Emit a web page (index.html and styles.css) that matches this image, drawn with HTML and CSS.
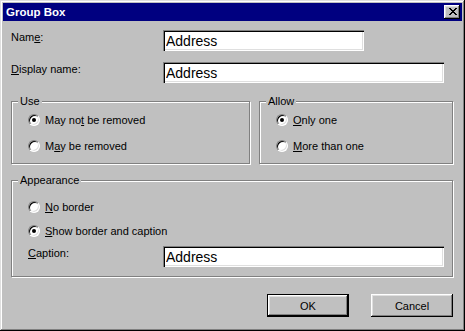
FILE: index.html
```html
<!DOCTYPE html>
<html lang="en">
<head>
  <meta charset="UTF-8">
  <title>Group Box</title>
  <link rel="stylesheet" href="styles.css">
</head>
<body>
  <div class="window">
    <div class="titlebar">
      <span class="title">Group Box</span>
      <button class="close" aria-label="Close">
        <svg width="8" height="7" viewBox="0 0 8 7" shape-rendering="crispEdges">
          <path fill="#000" d="M0 0h2v1H0z M6 0h2v1H6z M1 1h2v1H1z M5 1h2v1H5z M2 2h4v1H2z M3 3h2v1H3z M2 4h4v1H2z M1 5h2v1H1z M5 5h2v1H5z M0 6h2v1H0z M6 6h2v1H6z"/>
        </svg>
      </button>
    </div>

    <div class="content">
      <div class="field-row">
        <label class="field-label">Nam<u>e</u>:</label>
        <input class="textbox name-box" type="text" value="Address">
      </div>
      <div class="field-row">
        <label class="field-label"><u>D</u>isplay name:</label>
        <input class="textbox wide-box" type="text" value="Address">
      </div>

      <div class="groups">
        <fieldset class="group use-group">
          <legend>Use</legend>
          <div class="group-body">
            <div class="option"><span class="radio checked"></span><span>May no<u>t</u> be removed</span></div>
            <div class="option"><span class="radio"></span><span>M<u>a</u>y be removed</span></div>
          </div>
        </fieldset>
        <fieldset class="group allow-group">
          <legend>Allow</legend>
          <div class="group-body">
            <div class="option"><span class="radio checked"></span><span><u>O</u>nly one</span></div>
            <div class="option"><span class="radio"></span><span><u>M</u>ore than one</span></div>
          </div>
        </fieldset>
      </div>

      <fieldset class="group appearance-group">
        <legend>Appearance</legend>
        <div class="group-body appearance-body">
          <div class="option"><span class="radio"></span><span><u>N</u>o border</span></div>
          <div class="option"><span class="radio checked"></span><span><u>S</u>how border and caption</span></div>
          <div class="caption-row">
            <label class="caption-label"><u>C</u>aption:</label>
            <input class="textbox wide-box" type="text" value="Address">
          </div>
        </div>
      </fieldset>

      <div class="buttons">
        <button class="btn default">OK</button>
        <button class="btn">Cancel</button>
      </div>
    </div>
  </div>
</body>
</html>
```

FILE: styles.css
```css
* {
  box-sizing: border-box;
}

body {
  margin: 0;
  background: #c0c0c0;
  font-family: "Liberation Sans", Arial, sans-serif;
  font-size: 11px;
  color: #000;
}

.window {
  width: 465px;
  height: 331px;
  padding: 3px;
  background: #c0c0c0;
  box-shadow: inset -1px -1px #000, inset 1px 1px #dfdfdf,
              inset -2px -2px #808080, inset 2px 2px #fff;
}

.titlebar {
  height: 18px;
  padding: 0 2px 0 3px;
  background: #000080;
  color: #fff;
  display: flex;
  align-items: center;
  justify-content: space-between;
}

.title {
  font-weight: bold;
  font-size: 11.5px;
}

.close {
  width: 16px;
  height: 14px;
  padding: 0 0 1px 1px;
  border: none;
  background: #c0c0c0;
  display: flex;
  align-items: center;
  justify-content: center;
  box-shadow: inset -1px -1px #000, inset 1px 1px #fff,
              inset -2px -2px #808080, inset 2px 2px #dfdfdf;
}

.content {
  padding: 9px 9px 0 8px;
}

/* top label + textbox rows */
.field-row {
  display: flex;
  align-items: flex-start;
  height: 21px;
}

.field-row + .field-row {
  margin-top: 11px;
}

.field-label {
  width: 152px;
  line-height: 13px;
  padding-top: 1px;
}

.textbox {
  height: 21px;
  padding: 0 2px 0 3px;
  border: none;
  outline: none;
  background: #fff;
  font-family: "Liberation Sans", Arial, sans-serif;
  font-size: 14px;
  color: #000;
  box-shadow: inset 1px 1px #808080, inset 2px 2px #000,
              inset -1px -1px #fff, inset -2px -2px #dfdfdf;
}

.name-box {
  width: 201px;
}

.wide-box {
  width: 281px;
}

/* group boxes */
.groups {
  display: flex;
  gap: 9px;
  margin-top: 12px;
}

.group {
  margin: 0;
  padding: 0;
  min-width: 0;
  border: 1px solid #808080;
  box-shadow: inset 1px 1px #fff, 1px 1px #fff;
}

.group legend {
  margin-left: 6px;
  padding: 0 2px;
  line-height: 13px;
  background: #c0c0c0;
}

.use-group {
  width: 239px;
}

.allow-group {
  width: 194px;
}

.appearance-group {
  width: 442px;
  margin-top: 10px;
}

.group-body {
  display: flex;
  flex-direction: column;
  gap: 10px;
  padding: 4px 0 9px 16px;
}

.appearance-body {
  gap: 8px;
  padding-top: 12px;
}

.option {
  display: flex;
  align-items: center;
  gap: 5px;
  height: 16px;
}

.radio {
  position: relative;
  width: 12px;
  height: 12px;
  border-radius: 50%;
  border: 1px solid;
  border-color: #808080 #fff #fff #808080;
  background: #fff;
  box-shadow: inset 1px 1px #000, inset -1px -1px #dfdfdf;
}

.radio.checked::after {
  content: "";
  position: absolute;
  left: 3px;
  top: 3px;
  width: 4px;
  height: 4px;
  border-radius: 50%;
  background: #000;
}

.caption-row {
  display: flex;
  align-items: flex-start;
  margin-top: -1px;
}

.caption-label {
  width: 135px;
  line-height: 13px;
  padding-top: 1px;
}

/* dialog buttons */
.buttons {
  display: flex;
  justify-content: flex-end;
  gap: 22px;
  margin-top: 17px;
}

.btn {
  width: 82px;
  height: 23px;
  padding: 0;
  border: none;
  background: #c0c0c0;
  font-family: "Liberation Sans", Arial, sans-serif;
  font-size: 11px;
  color: #000;
  box-shadow: inset -1px -1px #000, inset 1px 1px #fff,
              inset -2px -2px #808080, inset 2px 2px #dfdfdf;
}

.btn.default {
  border: 1px solid #000;
}
```
